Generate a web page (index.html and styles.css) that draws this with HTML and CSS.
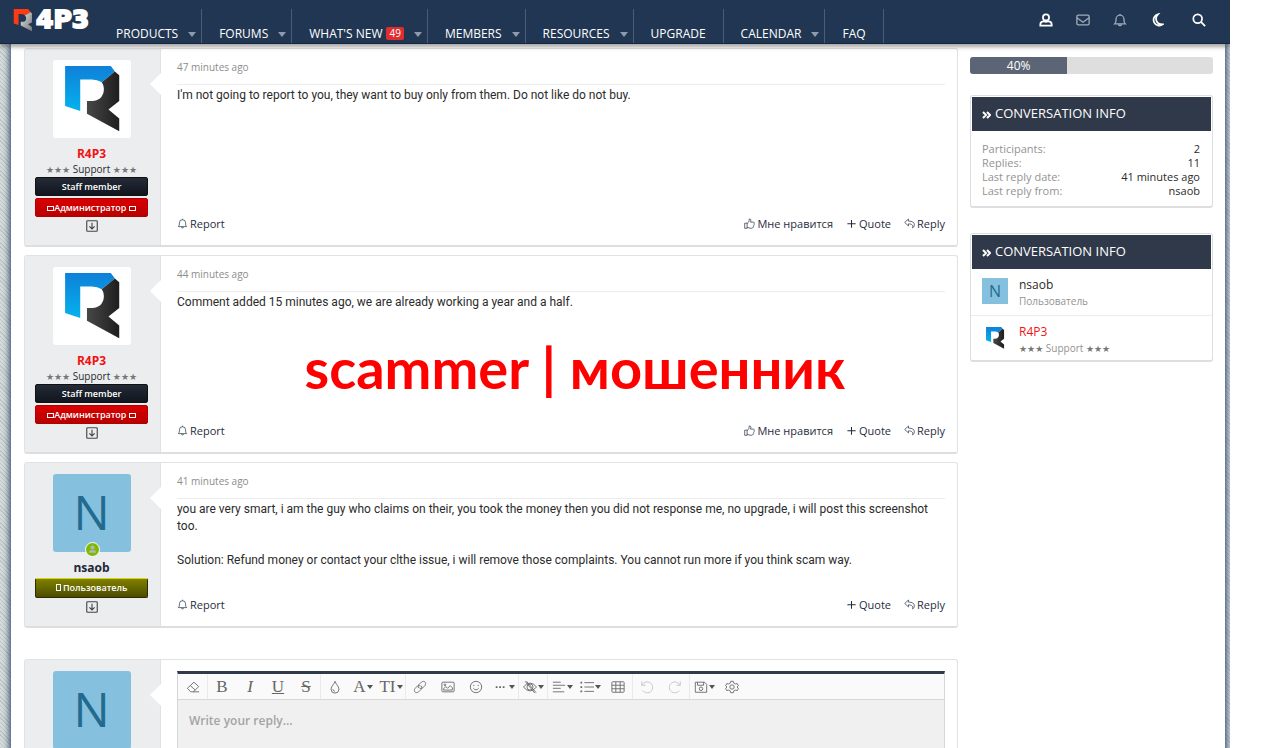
FILE: index.html
```html
<!DOCTYPE html>
<html lang="en">
<head>
<meta charset="utf-8">
<title>Conversation</title>
<link rel="stylesheet" href="styles.css">
</head>
<body>
<svg class="sprite" aria-hidden="true">
  <defs>
    <linearGradient id="g-blue" x1="0" y1="0" x2="0" y2="1"><stop offset="0" stop-color="#0f80d8"/><stop offset="1" stop-color="#04b2ee"/></linearGradient>
    <linearGradient id="g-dark" x1="0" y1="0" x2="1" y2="0"><stop offset="0" stop-color="#484848"/><stop offset="1" stop-color="#1e1e1e"/></linearGradient>
    <linearGradient id="g-steel" x1="0" y1="0" x2="1" y2="1"><stop offset="0" stop-color="#e4e4e4"/><stop offset="1" stop-color="#777"/></linearGradient>
  </defs>
  <symbol id="r-logo" viewBox="0 0 232 232">
    <path fill="url(#g-blue)" d="M36 18H172L184 34L145 66Q130 56 108 58H81V152L36 137Z"/>
    <path fill="url(#g-dark)" d="M184 34L197 45V122L165 147L197 174V212L101 160V122H118C152 120 158 84 145 66Z"/>
  </symbol>
  <symbol id="bell" viewBox="0 0 16 16"><path d="M2 12.5C3.500 11 3.500 9.500 3.500 7a4.500 4.500 0 0 1 9 0c0 2.500 0 4 1.500 5.500ZM6.500 13a1.500 1.500 0 0 0 3 0M8 1v1.500"/></symbol>
  <symbol id="user" viewBox="0 0 16 16"><circle cx="8" cy="5" r="3.500"/><path d="M5.500 9.500C3 9.500 1.500 11 1.500 13v1.500h13V13c0-2-1.500-3.500-4-3.500Q8 10.500 5.500 9.500Z"/></symbol>
  <symbol id="mail" viewBox="0 0 16 16"><rect x="1" y="2.500" width="14" height="11" rx="1.500"/><path d="M1 5.500L8 10.500L15 5.500"/></symbol>
  <symbol id="moon" viewBox="0 0 16 16"><path d="M9 1.500A6.500 6.500 0 1 0 14.500 13C6 13 5.500 5 9 1.500Z"/></symbol>
  <symbol id="search" viewBox="0 0 16 16"><circle cx="6.500" cy="6.500" r="5"/><path d="M10.500 10.500L15 15"/></symbol>
  <symbol id="down" viewBox="0 0 16 16"><rect x="1" y="1" width="14" height="14" rx="1"/><path d="M8 3.500V12M4.500 8.500L8 12L11.500 8.500"/></symbol>
  <symbol id="thumb" viewBox="0 0 16 16"><path d="M1 7.500H4.500V15H1ZM4.500 8C7 6.500 7.500 4.500 7.500 1.500C10 .5 10.500 3.500 9.500 6H14C15.500 6.500 15 8 14.500 8.500C15.200 10 14.500 10.500 14 11C14.300 12.500 13.500 13 13 13C13 14.500 12 15 10.500 15C8 15 6.500 14 4.500 13.500"/></symbol>
  <symbol id="reply" viewBox="0 0 16 16"><path d="M1 6.500L6.500 1.500V4.500C12 4.500 15 6 15 10C15 12 14 13.500 12.500 14.500C13.500 11 12 8.500 6.500 8.500V11.500Z"/></symbol>
  <symbol id="plus" viewBox="0 0 16 16"><path stroke-width="1.500" d="M8 3V14M2 8.500H14"/></symbol>
  <symbol id="eraser" viewBox="0 0 16 16"><path d="M5.500 13.500L1.500 9.500L9 2.500L14.500 7.500L8.500 13.500H15M5.500 13.500H9M5 6.500L10.500 11.500"/></symbol>
  <symbol id="drop" viewBox="0 0 16 16"><path d="M8 1.500C9 5 12.500 7 12.500 10.500a4.500 4.500 0 0 1-9 0C3.500 7 7 5 8 1.500ZM5.500 10.500Q6 12.500 8 13"/></symbol>
  <symbol id="link" viewBox="0 0 16 16"><path d="M7 9.500C5 7.500 6 6 7 5L9.500 2.500C13 0 16 3 13.500 6.500L11 9C10 10 8.500 10 7.500 9M9 6.500C11 8.500 10 10 9 11L6.500 13.500C3 16 0 13 2.500 9.500L5 7C6 6 7.500 6 8.500 7"/></symbol>
  <symbol id="image" viewBox="0 0 16 16"><rect x="1" y="2.500" width="14" height="11" rx="1"/><path d="M3 11.500V10L5.500 7.500L7.500 9.500L10.500 6.500L13 9V11.500Z"/><circle cx="4.500" cy="5.500" r="1"/></symbol>
  <symbol id="smile" viewBox="0 0 16 16"><circle cx="8" cy="8" r="6.500"/><path d="M5 9.500Q8 13 11 9.500M5.500 5.500V7M10.500 5.500V7"/></symbol>
  <symbol id="dots" viewBox="0 0 16 16"><path stroke-width="2" d="M2 8h2M6 8h2M10 8h2"/></symbol>
  <symbol id="eye" viewBox="0 0 16 16"><path d="M.5 8Q8-1 15.500 8Q8 17 .5 8ZM2.500 1.500L13.500 15M4 1.500L15 14.500"/><circle cx="8" cy="8" r="3.500"/></symbol>
  <symbol id="align" viewBox="0 0 16 16"><path d="M1 2.500H10M1 6H15M1 9.500H10M1 13.500H14"/></symbol>
  <symbol id="list" viewBox="0 0 16 16"><path d="M5 3H16M5 8H16M5 13H16"/><path stroke-width="2" d="M.5 3h2M.5 8h2M.5 13h2"/></symbol>
  <symbol id="table" viewBox="0 0 16 16"><rect x="1" y="2" width="14" height="12" rx="1"/><path d="M1 6H15M1 10H15M5.500 2V14M10.500 2V14"/></symbol>
  <symbol id="undo" viewBox="0 0 16 16"><path d="M2 1.500V6H6.500M2 6C6-.5 14.500 2 14.500 8.500C14.500 14.500 7 17 3 12"/></symbol>
  <symbol id="redo" viewBox="0 0 16 16"><path d="M14 1.500V6H9.500M14 6C10-.5 1.500 2 1.500 8.500C1.500 14.500 9 17 13 12"/></symbol>
  <symbol id="save" viewBox="0 0 16 16"><path d="M1.500 2.500H12L14.500 5V14H1.500ZM4 2.500V6H11V2.500"/><circle cx="8" cy="10" r="2"/></symbol>
  <symbol id="gear" viewBox="0 0 16 16"><path d="M6.500 1.500H9.500L10 3.500L12 4.500L14 4L15.300 6.500L13.800 8L15.300 9.500L14 12L12 11.500L10 12.500L9.500 14.500H6.500L6 12.500L4 11.500L2 12L.7 9.500L2.200 8L.7 6.500L2 4L4 4.500L6 3.500Z"/><circle cx="8" cy="8" r="2.500"/></symbol>
</svg>

<div class="site">
  <header class="header">
    <a class="logo" href="#" aria-label="R4P3">
      <svg class="logo-mark" viewBox="0 0 60 72"><path fill="#fc3b14" d="M1 0H46L54 9L36 20Q30 14 16 16V50L1 45Z"/><path fill="url(#g-steel)" d="M54 9L58 14V42L46 48L58 56V70L23 52V40H30C42 40 42 24 36 20Z"/></svg>
      <span class="logo-text">4P3</span>
    </a>
    <nav class="nav">
      <a class="tab has-menu" href="#">PRODUCTS</a>
      <a class="tab has-menu" href="#">FORUMS</a>
      <a class="tab has-menu" href="#">WHAT'S NEW <span class="count">49</span></a>
      <a class="tab has-menu" href="#">MEMBERS</a>
      <a class="tab has-menu" href="#">RESOURCES</a>
      <a class="tab" href="#">UPGRADE</a>
      <a class="tab has-menu" href="#">CALENDAR</a>
      <a class="tab" href="#">FAQ</a>
    </nav>
    <div class="tools">
      <button class="tool" aria-label="Account"><svg><use href="#user"/></svg></button>
      <button class="tool dim" aria-label="Messages"><svg><use href="#mail"/></svg></button>
      <button class="tool dim" aria-label="Alerts"><svg><use href="#bell"/></svg></button>
      <button class="tool" aria-label="Dark mode"><svg><use href="#moon"/></svg></button>
      <button class="tool search" aria-label="Search"><svg><use href="#search"/></svg></button>
    </div>
  </header>

  <div class="content">
    <main class="posts">
      <article class="post">
        <div class="author">
          <div class="avatar white"><svg><use href="#r-logo"/></svg></div>
          <a class="name red" href="#">R4P3</a>
          <div class="title"><span class="stars">★★★</span> Support <span class="stars">★★★</span></div>
          <div class="badge staff">Staff member</div>
          <div class="badge admin"><i class="flag"></i>Администратор <i class="flag"></i></div>
          <button class="more" aria-label="Show details"><svg><use href="#down"/></svg></button>
        </div>
        <div class="body">
          <div class="time">47 minutes ago</div>
          <p class="text">I'm not going to report to you, they want to buy only from them. Do not like do not buy.</p>
          <div class="actions">
            <a href="#"><svg><use href="#bell"/></svg>Report</a>
            <a class="first-right" href="#"><svg><use href="#thumb"/></svg>Мне нравится</a>
            <a href="#"><svg><use href="#plus"/></svg>Quote</a>
            <a href="#"><svg><use href="#reply"/></svg>Reply</a>
          </div>
        </div>
      </article>

      <article class="post">
        <div class="author">
          <div class="avatar white"><svg><use href="#r-logo"/></svg></div>
          <a class="name red" href="#">R4P3</a>
          <div class="title"><span class="stars">★★★</span> Support <span class="stars">★★★</span></div>
          <div class="badge staff">Staff member</div>
          <div class="badge admin"><i class="flag"></i>Администратор <i class="flag"></i></div>
          <button class="more" aria-label="Show details"><svg><use href="#down"/></svg></button>
        </div>
        <div class="body">
          <div class="time">44 minutes ago</div>
          <p class="text">Comment added 15 minutes ago, we are already working a year and a half.</p>
          <p class="stamp">scammer | мошенник</p>
          <div class="actions">
            <a href="#"><svg><use href="#bell"/></svg>Report</a>
            <a class="first-right" href="#"><svg><use href="#thumb"/></svg>Мне нравится</a>
            <a href="#"><svg><use href="#plus"/></svg>Quote</a>
            <a href="#"><svg><use href="#reply"/></svg>Reply</a>
          </div>
        </div>
      </article>

      <article class="post">
        <div class="author">
          <div class="avatar letter">N<span class="online"><svg viewBox="0 0 16 16"><circle cx="8" cy="5.500" r="2.500"/><path d="M3.500 12Q3.500 9 6 9H10Q12.500 9 12.500 12Z"/></svg></span></div>
          <a class="name" href="#">nsaob</a>
          <div class="badge member"><i class="box"></i> Пользователь</div>
          <button class="more" aria-label="Show details"><svg><use href="#down"/></svg></button>
        </div>
        <div class="body">
          <div class="time">41 minutes ago</div>
          <p class="text">you are very smart, i am the guy who claims on their, you took the money then you did not response me, no upgrade, i will post this screenshot too.<br><br>Solution: Refund money or contact your clthe issue, i will remove those complaints. You cannot run more if you think scam way.</p>
          <div class="actions">
            <a href="#"><svg><use href="#bell"/></svg>Report</a>
            <a class="first-right" href="#"><svg><use href="#plus"/></svg>Quote</a>
            <a href="#"><svg><use href="#reply"/></svg>Reply</a>
          </div>
        </div>
      </article>

      <form class="post compose">
        <div class="author"><div class="avatar letter">N</div></div>
        <div class="body">
          <div class="editor">
            <div class="toolbar">
              <div class="group"><button type="button" aria-label="Remove formatting"><svg><use href="#eraser"/></svg></button></div>
              <div class="group"><button type="button">B</button><button type="button" class="it">I</button><button type="button" class="un">U</button><button type="button" class="st">S</button></div>
              <div class="group"><button type="button" aria-label="Text colour"><svg><use href="#drop"/></svg></button><button type="button" class="menu">A</button><button type="button" class="menu">TI</button></div>
              <div class="group"><button type="button" aria-label="Link"><svg><use href="#link"/></svg></button><button type="button" aria-label="Image"><svg><use href="#image"/></svg></button><button type="button" aria-label="Smilies"><svg><use href="#smile"/></svg></button><button type="button" class="menu" aria-label="Insert"><svg><use href="#dots"/></svg></button></div>
              <div class="group"><button type="button" class="menu" aria-label="Spoiler"><svg><use href="#eye"/></svg></button></div>
              <div class="group"><button type="button" class="menu" aria-label="Alignment"><svg><use href="#align"/></svg></button><button type="button" class="menu" aria-label="List"><svg><use href="#list"/></svg></button><button type="button" aria-label="Table"><svg><use href="#table"/></svg></button></div>
              <div class="group off"><button type="button" aria-label="Undo" disabled><svg><use href="#undo"/></svg></button><button type="button" aria-label="Redo" disabled><svg><use href="#redo"/></svg></button></div>
              <div class="group"><button type="button" class="menu" aria-label="Drafts"><svg><use href="#save"/></svg></button><button type="button" aria-label="Toggle code"><svg><use href="#gear"/></svg></button></div>
            </div>
            <textarea aria-label="Reply" placeholder="Write your reply..."></textarea>
          </div>
        </div>
      </form>
    </main>

    <aside class="side">
      <div class="progress" role="progressbar" aria-valuenow="40"><div class="fill" style="width:40%">40%</div></div>
      <section class="card">
        <h3><svg class="chev" viewBox="0 0 9 8"><path d="M1 1L4 4L1 7M5 1L8 4L5 7"/></svg>CONVERSATION INFO</h3>
        <dl class="pairs">
          <div><dt>Participants:</dt><dd>2</dd></div>
          <div><dt>Replies:</dt><dd>11</dd></div>
          <div><dt>Last reply date:</dt><dd>41 minutes ago</dd></div>
          <div><dt>Last reply from:</dt><dd>nsaob</dd></div>
        </dl>
      </section>
      <section class="card">
        <h3><svg class="chev" viewBox="0 0 9 8"><path d="M1 1L4 4L1 7M5 1L8 4L5 7"/></svg>CONVERSATION INFO</h3>
        <div class="person">
          <div class="mini letter">N</div>
          <div><a class="who" href="#">nsaob</a><div class="role">Пользователь</div></div>
        </div>
        <div class="person">
          <div class="mini"><svg><use href="#r-logo"/></svg></div>
          <div><a class="who red" href="#">R4P3</a><div class="role"><span class="stars">★★★</span> Support <span class="stars">★★★</span></div></div>
        </div>
      </section>
    </aside>
  </div>
</div>
</body>
</html>
```
FILE: styles.css
```css
* { box-sizing: border-box; }
body { margin: 0; background: #fff; color: #2b2b2b; font: 12px/17px "Open Sans", "Noto Sans", sans-serif; }
a { color: inherit; text-decoration: none; }
button { border: 0; padding: 0; background: none; color: inherit; font: inherit; }
p, h3, dl, dd { margin: 0; }
svg { display: block; fill: none; stroke: currentColor; }
.sprite { position: absolute; width: 0; height: 0; }

.site {
  display: flex; flex-direction: column; height: 100vh; margin-right: 50px; overflow: hidden;
  background: repeating-linear-gradient(45deg, #bcc8c8 0 1px, #d6dddb 1px 3px);
}

/* header */
.header {
  position: relative; z-index: 2; display: flex; flex: none; height: 44px; color: #fff;
  background: #203653; border-bottom: 1px solid #14253c; box-shadow: 0 3px 4px rgba(0, 0, 0, .35);
}
.logo { display: flex; align-items: flex-start; width: 99px; padding: 9px 0 0 13px; }
.logo-mark { width: 20px; height: 23px; stroke: none; }
.logo-text { padding-left: 3px; font: bold 25px/22px "DejaVu Sans", sans-serif; -webkit-text-stroke: 2px #fff; }
.nav { display: flex; margin-top: 9px; }
.tab {
  position: relative; display: flex; align-items: center; gap: 4px; padding: 16px 17px 2px 17px;
  border-right: 1px solid #4a5d76; font-weight: 500; white-space: nowrap;
}
.tab.has-menu { padding-right: 23px; }
.tab.has-menu::after {
  content: ""; position: absolute; right: 5px; top: 23px;
  border: 4px solid transparent; border-top: 5px solid #8e9bab; border-bottom: 0;
}
.count { padding: 0 3px; border-radius: 2px; background: #e02d30; font-size: 10px; line-height: 13px; }
.tools { display: flex; align-items: center; margin-left: auto; padding: 0 13px 4px 0; }
.tool { display: grid; place-items: center; width: 37px; height: 37px; }
.tool svg { width: 14px; height: 14px; stroke-width: 2; }
.tool.dim { color: #a2acb8; }
.tool.dim svg { stroke-width: 1.5; }
.tool.search { margin-left: 5px; }

/* layout */
.content {
  flex: 1 0 auto; display: grid; grid-template-columns: 1fr 243px; gap: 12px; align-items: start;
  margin: 0 5px 0 11px; padding: 4px 12px 0 13px; background: #fff; box-shadow: 0 0 7px 1px #1c3366;
}
.posts { display: flex; flex-direction: column; gap: 8px; min-width: 0; }

/* posts */
.post {
  display: flex; border: 1px solid #e0e2e4; border-bottom: 2px solid #dcdee0; border-radius: 3px; background: #fff;
}
.author {
  position: relative; flex: none; display: flex; flex-direction: column; align-items: center;
  width: 136px; padding: 11px 12px 12px 10px; border-right: 1px solid #e0e2e4; background: #ebedef;
}
.author::after {
  content: ""; position: absolute; right: -1px; top: 24px;
  border: 11px solid transparent; border-right-color: #fff; border-left: 0;
}
.avatar { position: relative; width: 78px; height: 78px; margin-bottom: 8px; border-radius: 3px; }
.white { background: #fff; }
.avatar > svg { width: 78px; height: 78px; stroke: none; }
.letter { background: #85c1de; color: #236b8e; text-align: center; font-size: 48px; line-height: 76px; }
.avatar.letter { font-weight: 500; }
.online {
  position: absolute; left: 32px; bottom: -5px; width: 15px; height: 15px;
  border: 1px solid #fff; border-radius: 50%; background: #7fb900;
}
.online svg { width: 13px; height: 13px; fill: #b2b5c4; stroke: none; }
.name { font-weight: 700; line-height: 16px; color: #1f2735; }
.name.red { color: #f01414; }
.title { margin-bottom: 1px; font-size: 10px; line-height: 14px; }
.stars { color: #777; font-family: "DejaVu Sans", sans-serif; font-size: 9px; line-height: 10px; }
.badge {
  width: 100%; margin-bottom: 2px; border: 1px solid #111; border-radius: 2px; color: #fff;
  text-align: center; font-size: 9px; font-weight: 600; line-height: 17px;
}
.staff { background: linear-gradient(#252b37, #10151e); }
.admin { background: linear-gradient(#d90000, #b80000); border-color: #b00000; }
.member { margin-top: 2px; background: linear-gradient(#808000, #4c4c00); border-color: #2c2c00; border-top-color: #d8d800; line-height: 18px; }
.flag { display: inline-block; width: 7px; height: 5px; border: 1px solid #fff; }
.box { display: inline-block; width: 5px; height: 7px; border: 1px solid #fff; }
.more { padding: 1px; color: #444; }
.more svg { width: 12px; height: 12px; stroke-width: 1.5; }

.body { flex: 1; min-width: 0; display: flex; flex-direction: column; padding: 11px 12px 13px 16px; }
.time { height: 25px; margin-bottom: 2px; border-bottom: 1px solid #ececec; color: #8c8c8c; font-size: 10px; font-weight: 500; line-height: 14px; }
.text { font-family: Roboto, "Open Sans", sans-serif; }
.stamp { margin-top: 23px; padding-left: 28px; text-align: center; color: #f00; font: bold 56px/68px Lato, "Open Sans", sans-serif; }
.actions { display: flex; gap: 13px; margin-top: auto; color: #1f2d40; font-size: 11px; }
.actions a { display: flex; align-items: center; gap: 2px; }
.actions svg { width: 11px; height: 11px; }
.first-right { margin-left: auto; }

/* reply form */
.compose { margin-top: 23px; }
.editor { border: 1px solid #d4d6d8; border-top: 3px solid #2f3949; }
.toolbar { display: flex; height: 26px; padding-left: 1px; border-bottom: 1px solid #d8d8d8; background: #fafafa; color: #666; }
.group { display: flex; border-right: 1px solid #eaeaea; }
.group:last-child { border: 0; }
.group button { display: flex; align-items: center; justify-content: center; gap: 1px; width: 28px; height: 25px; font: 17px/18px "Liberation Serif", serif; }
.group svg { width: 14px; height: 14px; flex: none; }
.group .it { font-style: italic; }
.group .un { text-decoration: underline; }
.group .st { text-decoration: line-through; }
.group .menu::after { content: ""; border: 3px solid transparent; border-top: 4px solid #555; border-bottom: 0; }
.off { color: #c4c4c4; }
textarea { display: block; width: 100%; height: 120px; border: 0; padding: 12px 11px; background: #f0f0f0; font: inherit; resize: none; }
textarea::placeholder { color: #a4a4a4; font-weight: 600; }

/* sidebar */
.side { display: flex; flex-direction: column; padding-top: 9px; }
.progress { overflow: hidden; margin-bottom: 21px; border-radius: 3px; background: #dedede; }
.fill { background: #5c6575; color: #fff; text-align: center; font-weight: 500; }
.card { margin-bottom: 25px; border: 1px solid #dcdee0; border-bottom-width: 2px; border-radius: 3px; }
.card h3 { display: flex; align-items: center; gap: 4px; margin: 1px 1px 0; padding: 8px 10px 9px; background: #2f3949; color: #fff; font-size: 13px; font-weight: 400; line-height: 17px; }
.chev { width: 9px; height: 8px; margin-top: 2px; stroke-width: 2; }
.pairs { padding: 11px 12px 8px 11px; font-size: 11px; line-height: 14px; }
.pairs div { display: flex; justify-content: space-between; }
.pairs dt, .role { color: #939393; }
.person { display: flex; gap: 11px; padding: 8px 11px 6px; }
.person + .person { padding-bottom: 4px; border-top: 1px solid #ececec; }
.mini { width: 26px; height: 26px; margin-top: 1px; }
.mini.letter { font-size: 16px; line-height: 26px; }
.mini svg { width: 26px; height: 26px; stroke: none; }
.who { display: block; line-height: 16px; }
.who.red { color: #f01414; }
.role { font-size: 10px; font-weight: 500; line-height: 16px; }
```
